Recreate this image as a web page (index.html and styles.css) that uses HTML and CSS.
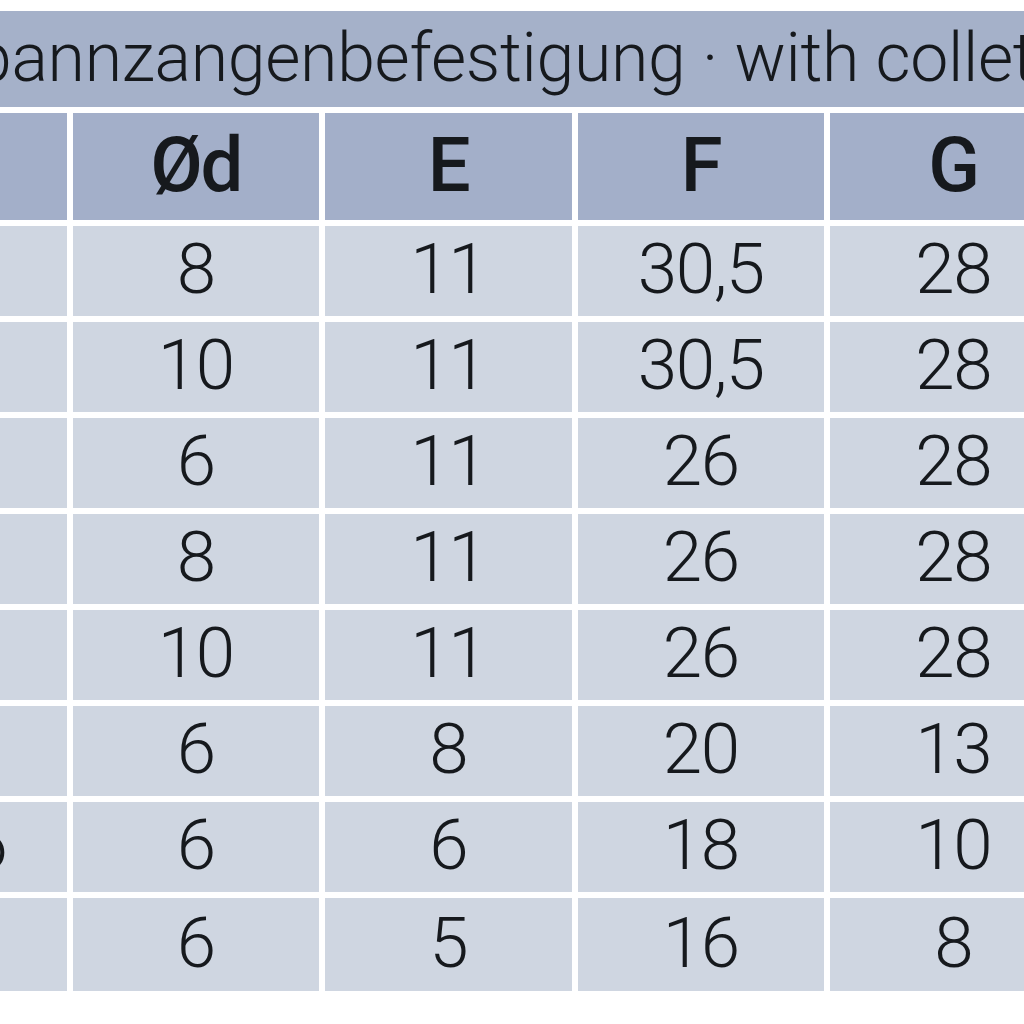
FILE: index.html
```html
<!DOCTYPE html>
<html lang="de">
<head>
<meta charset="utf-8">
<title>Spannzangenbefestigung</title>
<link rel="stylesheet" href="styles.css">
</head>
<body>
<div class="sheet">
  <div class="title-band">
    <span class="title-text">Spannzangenbefestigung · with collet chuck</span>
  </div>
  <table class="spec">
    <thead>
      <tr>
        <th></th>
        <th>Ød</th>
        <th>E</th>
        <th>F</th>
        <th>G</th>
      </tr>
    </thead>
    <tbody>
      <tr><td class="lead"></td><td>8</td><td>11</td><td>30,5</td><td>28</td></tr>
      <tr><td class="lead"></td><td>10</td><td>11</td><td>30,5</td><td>28</td></tr>
      <tr><td class="lead"></td><td>6</td><td>11</td><td>26</td><td>28</td></tr>
      <tr><td class="lead"></td><td>8</td><td>11</td><td>26</td><td>28</td></tr>
      <tr><td class="lead"></td><td>10</td><td>11</td><td>26</td><td>28</td></tr>
      <tr><td class="lead"></td><td>6</td><td>8</td><td>20</td><td>13</td></tr>
      <tr><td class="lead">6</td><td>6</td><td>6</td><td>18</td><td>10</td></tr>
      <tr class="last"><td class="lead"></td><td>6</td><td>5</td><td>16</td><td>8</td></tr>
    </tbody>
  </table>
</div>
</body>
</html>
```

FILE: styles.css
```css
html, body {
  margin: 0;
  padding: 0;
  background: #ffffff;
  overflow: hidden;
}

.sheet {
  width: 1024px;
  height: 1024px;
  overflow: hidden;
  padding-top: 11px;
  box-sizing: border-box;
  font-family: Roboto, "Liberation Sans", sans-serif;
  color: #16191d;
}

.title-band {
  height: 96px;
  background: #a5b1c9;
  white-space: nowrap;
  overflow: hidden;
  display: flex;
  align-items: center;
}

.title-text {
  font-size: 68px;
  font-weight: 300;
  letter-spacing: -0.3px;
  margin-left: -66px;
  line-height: 1;
  padding-bottom: 3px;
}

.spec {
  border-collapse: separate;
  border-spacing: 6px;
  table-layout: fixed;
  margin-left: -186px;
  width: 1268.5px;
}

.spec th,
.spec td {
  padding: 0;
  text-align: center;
  vertical-align: middle;
  white-space: nowrap;
}

.spec th {
  height: 107px;
  background: #a3afc9;
  font-size: 76px;
  font-weight: 500;
  letter-spacing: -2px;
  padding-bottom: 4px;
  box-sizing: border-box;
}

.spec td {
  height: 90px;
  background: #cfd6e1;
  font-size: 71px;
  font-weight: 300;
  letter-spacing: -1.5px;
  padding-bottom: 5px;
  box-sizing: border-box;
}

.spec tr.last td {
  height: 93px;
}

.spec td.lead {
  text-align: right;
  padding-right: 60px;
}
```
